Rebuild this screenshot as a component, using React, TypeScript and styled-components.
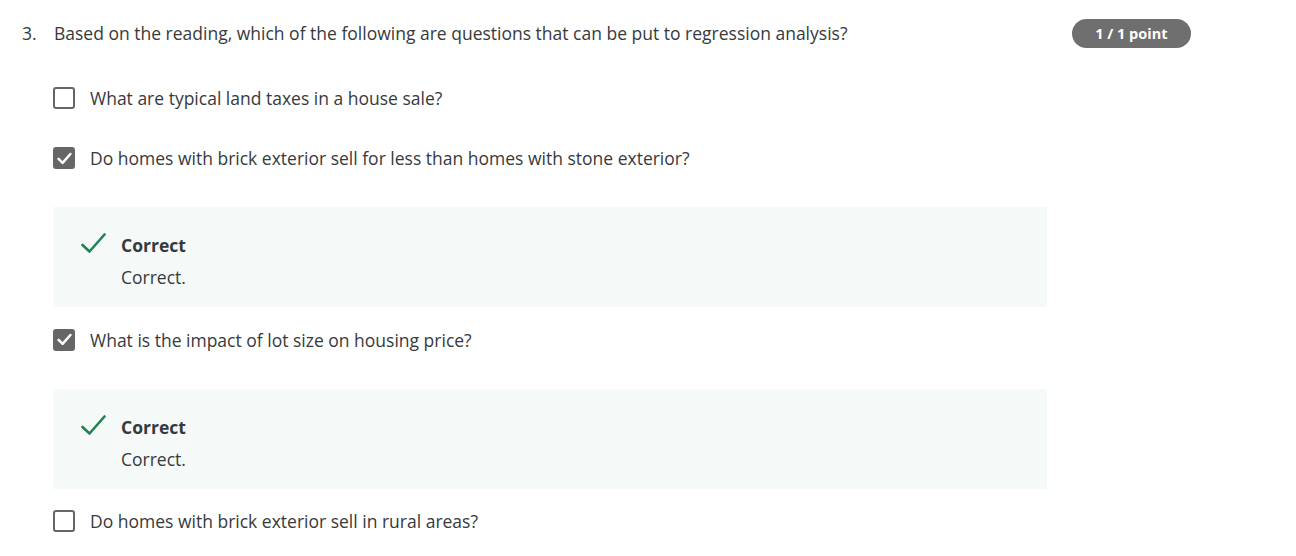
import React from "react";
import styled, { createGlobalStyle } from "styled-components";

const Global = createGlobalStyle`
  body {
    margin: 0;
    background: #ffffff;
    font-family: "Open Sans", "Noto Sans", Arial, sans-serif;
    color: #373a3c;
  }
`;

const Page = styled.div`
  padding: 18px 0 0 22px;
  width: 1169px;
`;

const QuestionRow = styled.div`
  display: grid;
  grid-template-columns: 32px 1fr auto;
  align-items: center;
`;

const Number = styled.span`
  font-size: 17.5px;
  line-height: 24px;
`;

const QuestionText = styled.span`
  font-size: 17.5px;
  line-height: 24px;
`;

const Badge = styled.span`
  display: inline-flex;
  align-items: center;
  height: 29px;
  padding: 0 23.5px;
  border-radius: 15px;
  background: #6f6f6f;
  color: #ffffff;
  font-size: 14.5px;
  font-weight: 700;
  margin-top: 1px;
`;

const Options = styled.div`
  display: flex;
  flex-direction: column;
  margin-top: 38px;
  padding-left: 31px;
  width: 994px;
`;

const OptionBlock = styled.div<{ $feedback: boolean }>`
  margin-bottom: ${(p) => (p.$feedback ? "20.5px" : "36px")};
`;

const OptionRow = styled.label`
  display: flex;
  align-items: center;
  gap: 15px;
  height: 24px;
  font-size: 17.5px;
  line-height: 24px;
`;

const Box = styled.span<{ $checked: boolean }>`
  box-sizing: border-box;
  width: 22px;
  height: 22px;
  border-radius: 3px;
  border: 2px solid #666666;
  background: ${(p) => (p.$checked ? "#666666" : "#ffffff")};
  display: inline-flex;
  align-items: center;
  justify-content: center;
  flex: none;
`;

const Feedback = styled.div`
  margin-top: 37px;
  background: #f5f9f8;
  padding: 26px 0 18px 28px;
  display: grid;
  grid-template-columns: 25px 1fr;
  column-gap: 15px;
`;

const FeedbackIcon = styled.svg`
  width: 25px;
  height: 20px;
`;

const FeedbackTitle = styled.div`
  font-size: 17.5px;
  line-height: 24px;
  font-weight: 700;
`;

const FeedbackBody = styled.div`
  grid-column: 2;
  margin-top: 8px;
  font-size: 17.5px;
  line-height: 24px;
`;

const options = [
  { text: "What are typical land taxes in a house sale?", checked: false },
  {
    text: "Do homes with brick exterior sell for less than homes with stone exterior?",
    checked: true,
  },
  { text: "What is the impact of lot size on housing price?", checked: true },
  { text: "Do homes with brick exterior sell in rural areas?", checked: false },
];

export default function App() {
  return (
    <>
      <Global />
      <Page>
        <QuestionRow>
          <Number>3.</Number>
          <QuestionText>
            Based on the reading, which of the following are questions that can be put to regression analysis?
          </QuestionText>
          <Badge>1 / 1 point</Badge>
        </QuestionRow>
        <Options>
          {options.map((o) => (
            <OptionBlock key={o.text} $feedback={o.checked}>
              <OptionRow>
                <Box $checked={o.checked}>
                  {o.checked && (
                    <svg width="15" height="13" viewBox="0 0 15 13">
                      <path
                        d="M1.6 6.8 L5.6 10.8 L13.4 2"
                        fill="none"
                        stroke="#ffffff"
                        strokeWidth="2.5"
                        strokeLinecap="round"
                        strokeLinejoin="round"
                      />
                    </svg>
                  )}
                </Box>
                {o.text}
              </OptionRow>
              {o.checked && (
                <Feedback>
                  <FeedbackIcon viewBox="0 0 25 20">
                    <path
                      d="M1.5 12 L8.5 18.5 L23.5 1.5"
                      fill="none"
                      stroke="#1f8354"
                      strokeWidth="2.6"
                      strokeLinecap="round"
                      strokeLinejoin="round"
                    />
                  </FeedbackIcon>
                  <FeedbackTitle>Correct</FeedbackTitle>
                  <FeedbackBody>Correct.</FeedbackBody>
                </Feedback>
              )}
            </OptionBlock>
          ))}
        </Options>
      </Page>
    </>
  );
}
